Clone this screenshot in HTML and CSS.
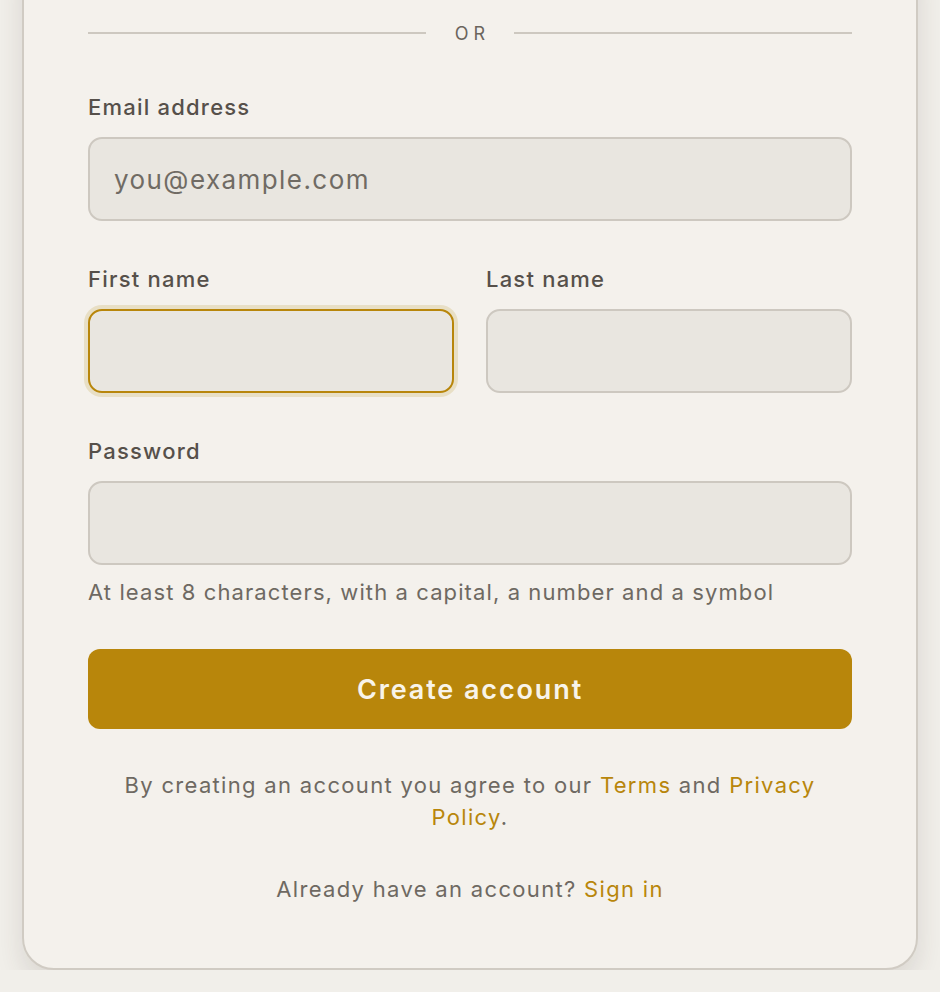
FILE: index.html
```html
<!DOCTYPE html>
<html lang="en">
<head>
<meta charset="utf-8">
<title>Create account</title>
<link rel="stylesheet" href="styles.css">
</head>
<body>
<main class="card">
  <div class="divider"><span class="divider-line"></span><span class="divider-text">OR</span><span class="divider-line"></span></div>
  <form class="form">
    <div class="field">
      <label class="label" for="email">Email address</label>
      <input class="input" id="email" type="email" placeholder="you@example.com">
    </div>
    <div class="row">
      <div class="field">
        <label class="label" for="first">First name</label>
        <input class="input input-focus" id="first" type="text">
      </div>
      <div class="field">
        <label class="label" for="last">Last name</label>
        <input class="input" id="last" type="text">
      </div>
    </div>
    <div class="field field-last">
      <label class="label" for="pw">Password</label>
      <input class="input" id="pw" type="password">
      <p class="hint">At least 8 characters, with a capital, a number and a symbol</p>
    </div>
    <button class="btn" type="button">Create account</button>
  </form>
  <p class="terms">By creating an account you agree to our <a href="#">Terms</a> and <a href="#">Privacy Policy</a>.</p>
  <p class="signin">Already have an account? <a href="#">Sign in</a></p>
</main>
</body>
</html>
```
FILE: styles.css
```css
* { box-sizing: border-box; }
html, body { margin: 0; padding: 0; }
body {
  background: #f1efea;
  font-family: Inter, "Noto Sans", sans-serif;
  color: #56504a;
  overflow: hidden;
}
.card {
  margin: -60px 22px 0;
  background: #f4f1ec;
  border: 2px solid #d0cbc3;
  border-radius: 32px;
  padding: 71px 64px 63px;
  box-shadow: 0 14px 28px rgba(60, 50, 40, 0.13);
}
.divider {
  display: flex;
  align-items: center;
  height: 40px;
  gap: 24px;
  margin-bottom: 38px;
}
.divider-line {
  flex: 1;
  height: 2px;
  background: #cdc8c0;
}
.divider-text {
  font-size: 18px;
  letter-spacing: 0.28em;
  color: #6b655d;
  padding-left: 0.28em;
}
.form { display: flex; flex-direction: column; }
.field { display: flex; flex-direction: column; margin-bottom: 42px; min-width: 0; }
.field-last { margin-bottom: 0; }
.row { display: grid; grid-template-columns: minmax(0, 1fr) minmax(0, 1fr); gap: 32px; }
.label {
  font-size: 22px;
  line-height: 30px;
  font-weight: 500;
  letter-spacing: 0.055em;
  color: #56504a;
  margin-top: 1px;
  margin-bottom: 15px;
}
.input {
  width: 100%;
  min-width: 0;
  height: 84px;
  border: 2px solid #cdc8c0;
  background: #e9e6e0;
  border-radius: 14px;
  padding: 0 24px;
  font-family: inherit;
  font-size: 26px;
  color: #3f3a34;
  outline: none;
}
.input::placeholder { color: #706b64; letter-spacing: 0.055em; }
.input-focus {
  border-color: #b8860b;
  box-shadow: 0 0 0 4px #e8dfc5;
}
.hint {
  margin: 12px 0 0;
  font-size: 22px;
  line-height: 30px;
  letter-spacing: 0.05em;
  color: #6e6962;
}
.btn {
  margin-top: 42px;
  height: 80px;
  border: 0;
  border-radius: 12px;
  background: #b8860b;
  color: #f8f4ea;
  font-family: inherit;
  font-size: 27px;
  font-weight: 600;
  letter-spacing: 0.07em;
}
.terms {
  margin: 40px 0 0;
  text-align: center;
  font-size: 22px;
  line-height: 32px;
  letter-spacing: 0.06em;
  color: #6e6962;
  padding: 0 20px;
}
.signin {
  margin: 40px 0 0;
  text-align: center;
  font-size: 22px;
  line-height: 32px;
  letter-spacing: 0.06em;
  color: #6e6962;
}
a { color: #b8860b; text-decoration: none; }
```
